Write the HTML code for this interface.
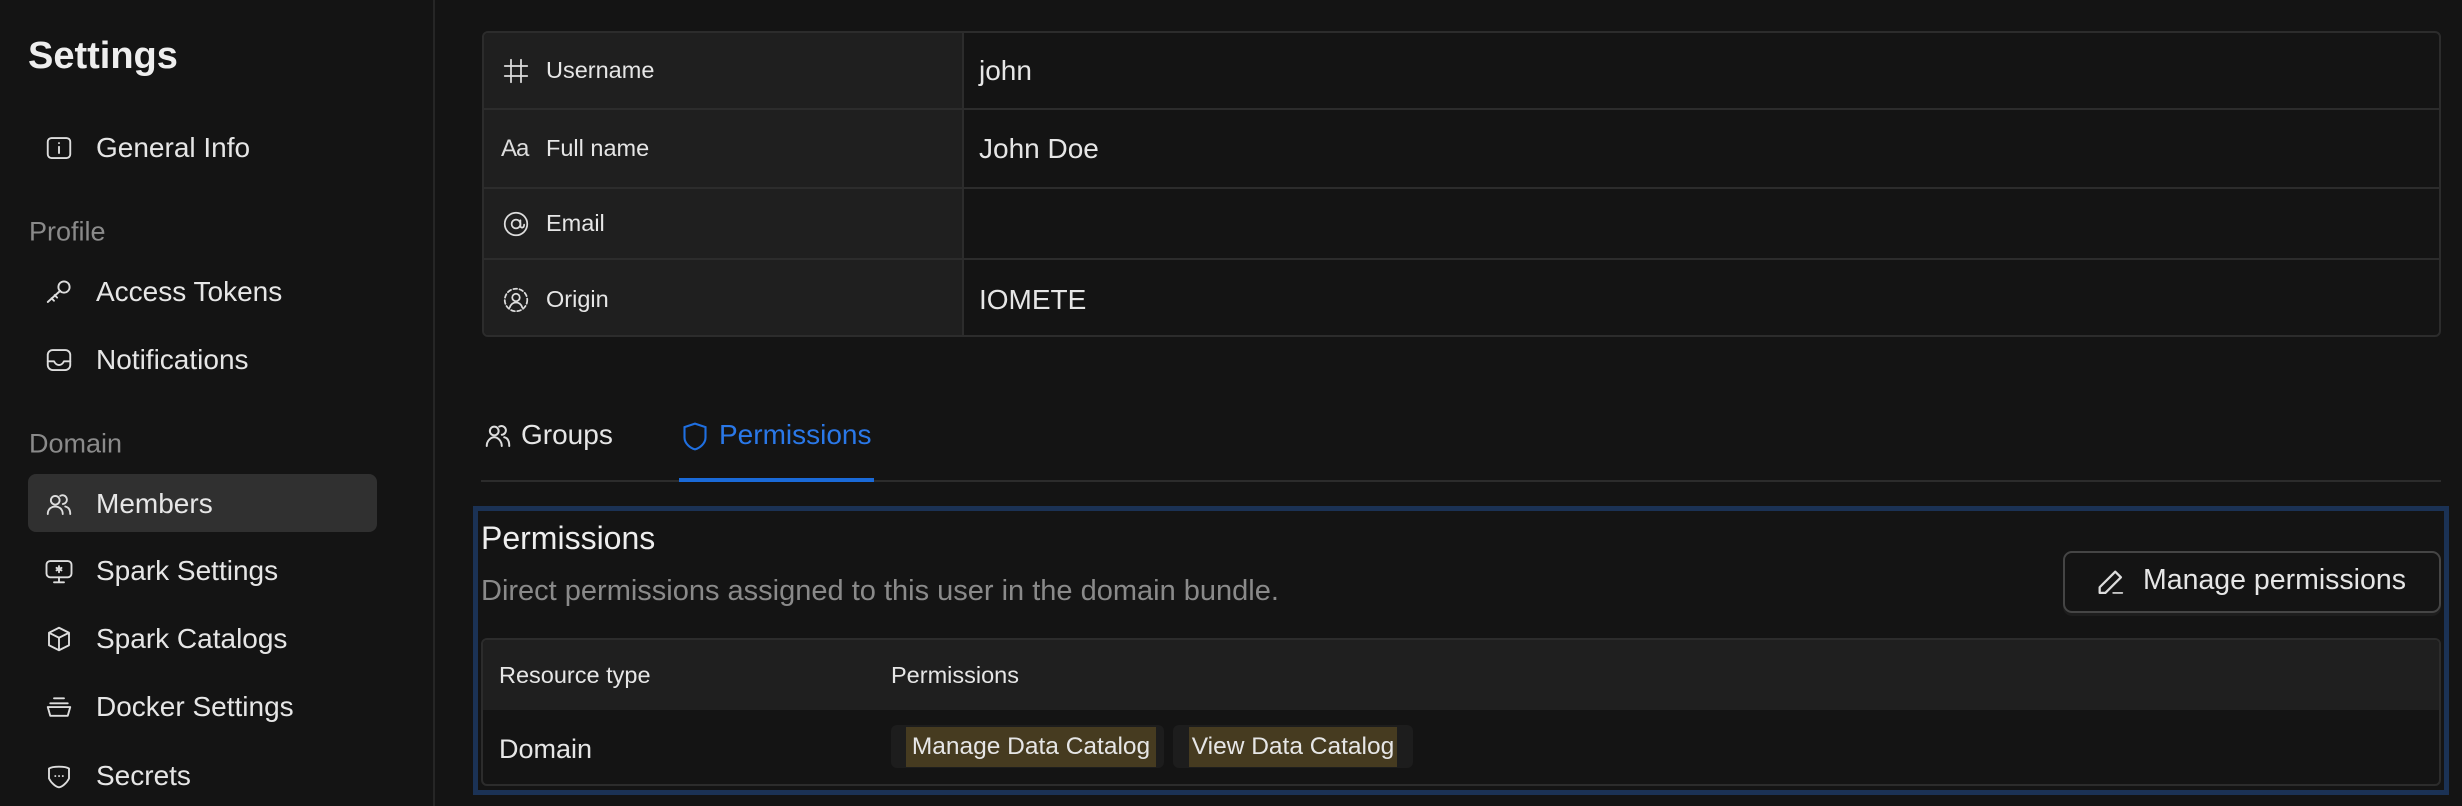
<!DOCTYPE html>
<html><head><meta charset="utf-8"><style>
*{margin:0;padding:0;box-sizing:border-box}
body{width:2462px;height:806px;background:#141414;font-family:"Liberation Sans",sans-serif;color:#e6e6e6;position:relative;overflow:hidden}
.a{position:absolute;white-space:nowrap}
.side{position:absolute;left:0;top:0;width:435px;height:806px;border-right:2px solid #262626}
.ni{position:absolute;left:44px;font-size:28px;display:flex;align-items:center;height:40px;transform:translateY(-50%)}
.ni svg{width:30px;height:30px;flex:0 0 30px;margin-right:22px;fill:none;stroke:#ddd;stroke-width:1.5;stroke-linecap:round;stroke-linejoin:round}
.sec{position:absolute;left:29px;font-size:27px;color:#8a8a8a;transform:translateY(-50%)}
.tbl{position:absolute;left:482px;top:31px;width:1959px;height:306px;border:2px solid #2c2c2c;border-radius:6px;overflow:hidden}
.row{position:absolute;left:0;width:100%;border-top:2px solid #2c2c2c}
.lab{position:absolute;left:0;top:0;width:480px;height:100%;background:#1f1f1f;border-right:2px solid #2c2c2c;display:flex;align-items:center;font-size:23.5px}
.lab svg{width:30px;height:30px;flex:0 0 30px;margin:0 15px 0 17px;fill:none;stroke:#ddd;stroke-width:1.4;stroke-linecap:round}
.val{position:absolute;left:495px;top:0;height:100%;display:flex;align-items:center;font-size:28px}
svg.i{fill:none;stroke:#ddd;stroke-width:1.6;stroke-linecap:round;stroke-linejoin:round}
</style></head><body>
<div class="side">
<div class="a" style="left:28px;top:35px;font-size:38px;font-weight:bold;color:#eee">Settings</div>
<div class="ni" style="top:148px"><svg viewBox="0 0 24 24"><rect x="3" y="4" width="18" height="16" rx="3"/><path d="M12 11v5M12 8v.1"/></svg>General Info</div>
<div class="sec" style="top:232px">Profile</div>
<div class="ni" style="top:292px"><svg viewBox="0 0 24 24"><circle cx="16" cy="8" r="4.5"/><path d="M13 11L3 20M6 17l2 2M8.5 14.5l2 2"/></svg>Access Tokens</div>
<div class="ni" style="top:360px"><svg viewBox="0 0 24 24"><rect x="3" y="4" width="18" height="16" rx="4"/><path d="M3 13h5c1 2 2 3 4 3s3-1 4-3h5"/></svg>Notifications</div>
<div class="sec" style="top:444px">Domain</div>
<div class="a" style="left:28px;top:474px;width:349px;height:58px;background:#303030;border-radius:8px"></div>
<div class="ni" style="top:504px"><svg viewBox="0 0 24 24"><circle cx="9" cy="9" r="3.5"/><path d="M3 20c0-4 3-6 6-6s6 2 6 6"/><path d="M13 5.5a3.5 3.5 0 1 1 2 6.5M17 14c2.5.5 4 2.5 4 6"/></svg>Members</div>
<div class="ni" style="top:571px"><svg viewBox="0 0 24 24"><rect x="2" y="4" width="20" height="13" rx="3"/><path d="M12 17v4M8 21h8M12 8v5M10 9.5l4 2M14 9.5l-4 2"/></svg>Spark Settings</div>
<div class="ni" style="top:639px"><svg viewBox="0 0 24 24"><path d="M12 3l8 4v10l-8 4-8-4V7zM4 7l8 4 8-4M12 11v10"/></svg>Spark Catalogs</div>
<div class="ni" style="top:707px"><svg viewBox="0 0 24 24"><path d="M8 5h8M5 9h14M3 12h18l-2 7H5z"/></svg>Docker Settings</div>
<div class="ni" style="top:776px"><svg viewBox="0 0 24 24"><path d="M4 6c3-2 13-2 16 0v8c-2 4-6 7-8 7s-6-3-8-7z"/><path d="M9 12h.1M12 12h.1M15 12h.1"/></svg>Secrets</div>
</div>

<div class="tbl">
<div class="row" style="top:-2px;height:79px;border-top:0"><div class="lab"><svg viewBox="0 0 24 24"><path d="M8 3v18M16 3v18M3 8h18M3 16h18"/></svg>Username</div><div class="val">john</div></div>
<div class="row" style="top:75px;height:79px"><div class="lab"><span style="width:30px;margin:0 15px 0 17px;font-size:24px;color:#ddd;letter-spacing:-1px">Aa</span>Full name</div><div class="val">John Doe</div></div>
<div class="row" style="top:154px;height:71px"><div class="lab"><svg viewBox="0 0 24 24"><circle cx="12" cy="12" r="9"/><circle cx="12" cy="12" r="3.5"/><path d="M15.5 9v4.5c0 2 3 2 3-1"/></svg>Email</div><div class="val"></div></div>
<div class="row" style="top:225px;height:81px"><div class="lab"><svg viewBox="0 0 24 24"><circle cx="12" cy="12" r="9" stroke-dasharray="3 2"/><circle cx="12" cy="10" r="3"/><path d="M7 18c1-3 3-4 5-4s4 1 5 4"/></svg>Origin</div><div class="val">IOMETE</div></div>
</div>

<svg class="i a" style="left:483px;top:421px" width="30" height="30" viewBox="0 0 24 24"><circle cx="9" cy="8" r="3.5"/><path d="M3 20c0-4 3-7 6-7s6 3 6 7"/><path d="M13 4.5a3.5 3.5 0 1 1 2 6.5M17 13c2.5.5 4 3 4 7"/></svg>
<div class="a" style="left:521px;top:419px;font-size:28px">Groups</div>
<svg class="a" style="left:681px;top:421px" width="28" height="31" viewBox="0 0 24 26" fill="none" stroke="#1f6fe0" stroke-width="1.8"><path d="M12 2l9 3v9c0 5-5 9-9 10-4-1-9-5-9-10V5z"/></svg>
<div class="a" style="left:719px;top:419px;font-size:28px;color:#2a78e8">Permissions</div>
<div class="a" style="left:481px;top:480px;width:1960px;height:2px;background:#2c2c2c"></div>
<div class="a" style="left:679px;top:478px;width:195px;height:4px;background:#1a6ad8"></div>

<div class="a" style="left:473px;top:506px;width:1976px;height:289px;border:5px solid #1b3255"></div>
<div class="a" style="left:481px;top:520px;font-size:32px;color:#eee">Permissions</div>
<div class="a" style="left:481px;top:575px;font-size:29px;color:#8a8a8a">Direct permissions assigned to this user in the domain bundle.</div>
<div class="a" style="left:2063px;top:551px;width:378px;height:62px;border:2px solid #454545;border-radius:9px;box-shadow:0 3px 0 #1d1d1d"></div>
<svg class="i a" style="left:2094px;top:566px" width="34" height="34" viewBox="0 0 24 24"><path d="M15 4l4 4L8 19H4v-4z"/><path d="M13.5 19H20" stroke-width="1.2"/></svg>
<div class="a" style="left:2143px;top:564px;font-size:28.5px;color:#e6e6e6">Manage permissions</div>

<div class="a" style="left:481px;top:638px;width:1960px;height:148px;border:2px solid #2c2c2c;border-radius:6px;overflow:hidden">
<div style="position:absolute;left:0;top:0;width:100%;height:70px;background:#1f1f1f"></div>
<div class="a" style="left:16px;top:22px;font-size:23.5px">Resource type</div>
<div class="a" style="left:408px;top:22px;font-size:23.5px">Permissions</div>
<div class="a" style="left:16px;top:94px;font-size:27px">Domain</div>
<div class="a" style="left:408px;top:85px;width:273px;height:43px;background:#1d1d1d;border-radius:6px"></div>
<div class="a" style="left:423px;top:87px;width:250px;height:40px;background:#463b20;font-size:24.5px;line-height:40px;text-align:center">Manage Data Catalog</div>
<div class="a" style="left:690px;top:85px;width:240px;height:43px;background:#1d1d1d;border-radius:6px"></div>
<div class="a" style="left:706px;top:87px;width:208px;height:40px;background:#463b20;font-size:24.5px;line-height:40px;text-align:center">View Data Catalog</div>
</div>
</body></html>
